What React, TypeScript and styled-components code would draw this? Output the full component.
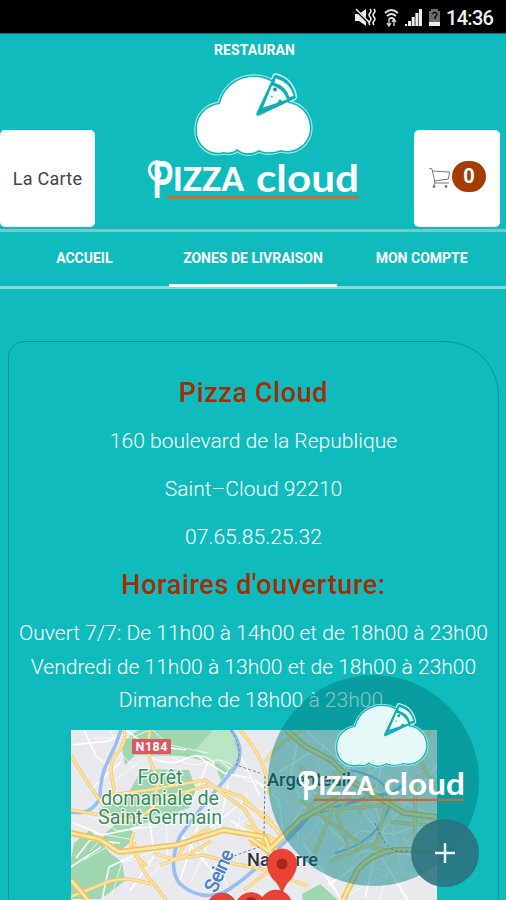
import React from 'react';
import styled, { createGlobalStyle } from 'styled-components';

const GlobalStyle = createGlobalStyle`
  * { box-sizing: border-box; }
  body { margin: 0; background: #10bbbd; }
`;

const Screen = styled.div`
  position: relative;
  width: 506px;
  height: 900px;
  overflow: hidden;
  display: flex;
  flex-direction: column;
  background: #10bbbd;
  font-family: Roboto, "Liberation Sans", sans-serif;
  color: #fff;
`;

const StatusBar = styled.div`
  flex: none;
  height: 34px;
  padding: 3px 12px 0 0;
  background: #000;
  border-bottom: 1px solid #087578;
  display: flex;
  justify-content: flex-end;
  align-items: center;
  gap: 5px;
`;

const Clock = styled.span`
  width: 48px;
  font-size: 20px;
  line-height: 30px;
  font-weight: 500;
  letter-spacing: -0.7px;
  white-space: nowrap;
  color: #f0f0f0;
`;

const Header = styled.header`
  flex: none;
  height: 195px;
  display: grid;
  grid-template-columns: 95px 319px 86px;
  align-items: end;
  padding-bottom: 2px;
`;

const HeaderCard = styled.button`
  height: 97px;
  border: 0;
  border-radius: 5px;
  padding: 0;
  background: #fff;
  display: flex;
  align-items: center;
  justify-content: center;
  gap: 2px;
  font: 400 18px Roboto, sans-serif;
  letter-spacing: 0.25px;
  color: #444;
`;

const CountBadge = styled.span`
  width: 34px;
  height: 31px;
  border-radius: 16px;
  background: #a63c03;
  color: #fff;
  font-size: 20px;
  font-weight: 700;
  line-height: 31px;
  text-align: center;
  margin-top: -4px;
`;

const Brand = styled.div`
  align-self: start;
  display: flex;
  flex-direction: column;
  align-items: center;
`;

const Tagline = styled.div`
  padding-top: 8px;
  height: 34px;
  font-size: 14px;
  line-height: 17px;
  font-weight: 700;
  letter-spacing: 0.1px;
`;

const LogoSvg = styled.svg`
  display: block;
  flex: none;
  overflow: visible;
`;

const Nav = styled.nav`
  flex: none;
  height: 60px;
  border-top: 3px solid #75c9ca;
  border-bottom: 3px solid #8ad5d6;
  display: grid;
  grid-template-columns: repeat(3, 1fr);
`;

const NavItem = styled.a<{ $active?: boolean }>`
  display: flex;
  align-items: center;
  justify-content: center;
  height: 55px;
  padding-bottom: 1px;
  font-size: 14px;
  font-weight: 700;
  white-space: nowrap;
  border-bottom: 3px solid ${p => (p.$active ? '#fff' : 'transparent')};
`;

const Card = styled.main`
  flex: none;
  margin: 52px 7px 0 8px;
  height: 640px;
  border: 1.5px solid #079398;
  border-radius: 16px 54px 0 0;
  padding-top: 34px;
  display: flex;
  flex-direction: column;
  align-items: center;
`;

const Heading = styled.h2`
  margin: 0;
  height: 34px;
  line-height: 34px;
  font-size: 27px;
  font-weight: 500;
  letter-spacing: 0.62px;
  color: #a32e08;
`;

const Address = styled.p`
  margin: 14px 0 0;
  height: 34px;
  line-height: 34px;
  font-size: 21.05px;
  font-weight: 300;
  white-space: nowrap;
`;

const Hours = styled.div`
  margin-top: 14px;
  display: flex;
  flex-direction: column;
  align-items: center;
`;

const HoursLine = styled.div`
  height: 33.6px;
  line-height: 33.6px;
  font-size: 21.05px;
  font-weight: 300;
  white-space: nowrap;
`;

const MapFrame = styled.div`
  margin-top: 13px;
  width: 366px;
  height: 170px;
`;

const Bubble = styled.div`
  position: absolute;
  left: 268px;
  top: 675px;
  width: 211px;
  height: 211px;
  border-radius: 50%;
  background: rgba(1, 128, 132, 0.48);
  padding: 24px 0 0 26px;
`;

const AddButton = styled.button`
  position: absolute;
  left: 411px;
  top: 819px;
  width: 68px;
  height: 68px;
  padding: 0;
  border: 0;
  border-radius: 50%;
  background: rgba(43, 113, 124, 0.88);
  display: flex;
  align-items: center;
  justify-content: center;
`;

const CLOUD =
  'M224 152 C209 156 196 144 197 129 C197 116 206 106 220 104 C224 87 238 77 254 77 C266 77 277 83 284 93 L288 103 C302 105 310 116 310 129 C309 144 295 154 281 150 C272 153 265 153 259 150 C251 155 243 154 237 149 C233 153 228 153 224 152 Z';
const SLICE = 'M258 114 L275.500 76.500 C286 79 292 87 294 97 Z';

function Logo({ width, height, soft = false }: { width: number; height: number; soft?: boolean }) {
  return (
    <LogoSvg width={width} height={height} viewBox="142 68 226 136" preserveAspectRatio="none">
      <g strokeLinejoin="round">
        <path d={CLOUD} fill="none" stroke="#a5e9e8" strokeWidth="5.400" />
        <path d={SLICE} fill="none" stroke="#d4f7f6" strokeWidth="6.500" />
        <path d={CLOUD} fill="#10b5b7" stroke="#10b5b7" strokeWidth="3.200" />
        <path d={CLOUD} fill="#fff" fillOpacity={soft ? 0.9 : 1} />
        <path d={SLICE} fill="#11afb2" stroke="#11afb2" strokeWidth="3.600" />
        <path d="M263 107.500 L272 85.500 C280 88 285 93 287 99.500 L282 101 L280 99 L277 103 Z" fill="#f2fffd" />
        <path d="M275 80.500 C284 83 289.500 89 291.500 96.500" fill="none" stroke="#f2fffd" strokeWidth="4.500" />
        <circle cx="275" cy="89.500" r="1.900" fill="#199b9e" />
        <path d="M270.500 96 l2.500 1" stroke="#39aeb0" strokeWidth="1" />
      </g>
      <path d="M167 197.500 H358" stroke="#c96c2d" strokeWidth="3" />
      <path
        d="M160 162.500 C153 159.500 147.500 167 150 173 C151 176 153 178.500 155.500 179.500 C162 177.500 161 170 156 170.500"
        fill="none" stroke="#fff" strokeWidth="3" strokeLinecap="round"
      />
      <g fill="#fff" fontFamily="Lato" fontWeight="700">
        <text x="152" y="198" fontSize="51" textLength="21" lengthAdjust="spacingAndGlyphs">P</text>
        <text x="173" y="191" fontSize="33" fontWeight="900" textLength="71" lengthAdjust="spacingAndGlyphs">IZZA</text>
        <text x="256" y="191.500" fontSize="38.500" textLength="103" lengthAdjust="spacingAndGlyphs">cloud</text>
      </g>
    </LogoSvg>
  );
}

function StatusIcons() {
  return (
    <svg width="87" height="22" viewBox="355 7 87 22" fill="#eee">
      <path d="M356 14h4l7-5v17l-7-5h-4z" />
      <path d="M357 10l14 14" stroke="#000" strokeWidth="2.500" />
      <path d="M357 9l14 14M371 9q2 2 0 4t0 4 0 4 0 4M375 9q2 2 0 4t0 4 0 4 0 4" fill="none" stroke="#eee" strokeWidth="1.500" />
      <path d="M386 13q6-6 13 0M388 16q4.500-4 9 0M390 19q2.500-2 5 0" fill="none" stroke="#ddd" strokeWidth="2" />
      <path d="M390 19v6M388 23l2 3 2-3M395 26v-6M393 22l2-3 2 3" fill="none" stroke="#ddd" strokeWidth="1.300" />
      <path d="M406 24h2v2h-2zM409 21h3v5h-3zM412.700 17h3v9h-3zM416.400 13h3v13h-3zM420 9h3v17h-3z" />
      <path d="M432 9h7v2h2v11h-11V11h2z" fill="#6a6a6a" />
      <path d="M430 22h11v4h-11z" />
      <path d="M433 14q3-3 5 0 0 2-2 3v2" stroke="#111" fill="none" strokeWidth="1.500" />
    </svg>
  );
}

function CartIcon() {
  return (
    <svg width="22" height="22" viewBox="-1 1 22 22" fill="none" stroke="#777" strokeWidth="1">
      <path d="M0 1l3 1 3 14h14M3.500 4l17 1-1 7-14 2M6 16l-1 2" />
      <circle cx="5" cy="19.500" r="1" fill="#666" />
      <circle cx="17" cy="19.500" r="1" fill="#666" />
    </svg>
  );
}

const MINOR_ROADS = [
  'M71 745l38-4 20-11M84 730l12 26 18 15M90 790l31-28M126 730l20 15 40 5M150 757q20 10 35 2t30 4M71 822l31 13 40-8',
  'M76 858l14-18 30 3M71 867l30-20M102 900l7-33 30-14M150 823l4 33-24 35M196 755l28 18 26 5M208 762l-15 38M228 785l-10 50',
  'M180 833l30 35 15 30M200 820l-20 60M238 750l22 46M245 800l-35 28M255 780l24 20 4 31M230 820l50 35M300 730l-10 49 20 37',
  'M279 772l30-19 32 11M290 828l20-34 26-5M306 731l70 60 56 24M350 730l-8 52 35 48M391 730l-18 70 16 49M409 742l-50 40',
  'M438 765l-45 54-35 36M320 820l35 30 60 5M330 859l30-28 34 3 40-13M328 885l50-33 30 48M303 842l36 54M365 898l12-51M403 838l34 44',
];

const MAIN_ROADS = [
  'M71 755q12 22 33 51M124 730q3 13-7 23t-3 35l-3 15M150 730q-5 23 4 40t-4 32M71 810l64 11 32-24 42-12 33 12 37 35',
  'M104 796l44-6 57-10 40 30 14 24M134 842q5 28 20 42l12 16M160 865q32-10 51-24M153 853l19 6 32-4 31 9 31 6M151 884q-30-10-51 1l-30 12',
  'M240 730q28 31 29 65M243 802l25 16 13 18M250 845l20-5 20 32M210 828q-30 13-32 33M134 832q-10 18 13 34',
  'M265 762q15-22 40-32M300 765l20 28-15 23M315 853l15-37 5-45M353 790l-16 25 12 34M374 784l-15 30M389 794l-14 55 30 2M320 810l70-5M300 800l62 45M430 730l-13 25 18 33M415 775v75',
  'M245 825l33 16M244 890l24-18 40 14M330 861l50-20M390 822l46 4',
];

const HIGHWAYS = [
  'M71 833l28 6 20 13 58-7 47-15 41 7 8 22M71 880l17 20M286 730l20 17 25 13 22 22 51 31 33 4',
  'M250 838l18 13 33-32 38-21M436 850h-41q-22 3-37 19l-15 31',
];

function MapDrawing() {
  return (
    <svg width="366" height="170" viewBox="71 730 366 170">
      <rect x="71" y="730" width="366" height="170" fill="#e8eaed" />
      <g fill="#a0d7b0">
        <path d="M138 730h90l12 18-5 25-14 7-7-17-31-7-48-1-10 10-4-22z" />
        <path d="M142 769l47 1 7 20-7 18-37 13-32 10-22-22 27-10z" />
        <path d="M74 843l16-13 20 23 12 9 3 19-24 18H71v-40z" />
        <path d="M101 837l26-23 7 25-15 13zM302 894l18-10 18 16h-35z" />
      </g>
      <path d="M195 750l18-20h18l9 30-12 10z" fill="#b9e5c5" />
      <g fill="none" stroke="#fff" strokeWidth="1.500">
        {MINOR_ROADS.map(d => <path key={d} d={d} />)}
        {MINOR_ROADS.map(d => <path key={`${d}-alt`} d={d} transform="translate(17 9) rotate(5 254 810)" strokeWidth=".7" />)}
      </g>
      <g fill="none" stroke="#9bbdf4" strokeWidth="3.600">
        <path d="M121 730q-5 16-13 31t-8 37q-9 18-29 14" />
        <path d="M231 730q14 18 6 35l-35 42-22 29q-13 32 0 48 20 17 42 9 17-8 45-35 24-20 43-43l60-18q35-4 35-20" />
        <path d="M350 770q45 8 39 38-13 35-54 45" strokeWidth="2" />
      </g>
      <g fill="none" stroke="#f1c76b" strokeWidth="3.400">
        {MAIN_ROADS.map(d => <path key={d} d={d} />)}
      </g>
      <g fill="none" stroke="#ffe29c" strokeWidth="2">
        {MAIN_ROADS.map(d => <path key={d} d={d} />)}
      </g>
      <g fill="none" stroke="#ecc263" strokeWidth="6">
        {HIGHWAYS.map(d => <path key={d} d={d} />)}
      </g>
      <g fill="none" stroke="#ffe6a3" strokeWidth="2.800">
        {HIGHWAYS.map(d => <path key={d} d={d} />)}
      </g>
      <path d="M231 730q13 20 5 35l24 8M265 776l-1 61M234 856l25-9M375 823q8 22 20 28h42" fill="none" stroke="#7c8490" strokeWidth="1" strokeDasharray="3 2" />
      <rect x="132" y="739" width="39" height="15" rx="1" fill="#dc5861" />
      <text x="151.500" y="751" textAnchor="middle" fontFamily="Roboto" fontSize="12.500" fontWeight="700" fill="#fff" textLength="32">N184</text>
      <g fontFamily="Roboto" fontSize="19.500" textAnchor="middle" fill="#3b8d60" stroke="#fff" strokeWidth="2.500" strokeOpacity=".8" paintOrder="stroke">
        <text x="160" y="784" textLength="45" lengthAdjust="spacingAndGlyphs">Forêt</text>
        <text x="160" y="804.500" textLength="118" lengthAdjust="spacingAndGlyphs">domaniale de</text>
        <text x="160" y="824" textLength="124" lengthAdjust="spacingAndGlyphs">Saint-Germain</text>
      </g>
      <text x="216" y="894" transform="rotate(-66 216 894)" fontFamily="Roboto" fontSize="20" fontWeight="500" fill="#4c7fc5" stroke="#eef2f8" strokeWidth="2" paintOrder="stroke" textLength="45">Seine</text>
      <g fontFamily="Roboto" fontSize="18" fontWeight="500" fill="#30343a" stroke="#fff" strokeWidth="1.500" strokeOpacity=".6" paintOrder="stroke">
        <text x="267" y="786" textLength="84" lengthAdjust="spacingAndGlyphs">Argenteuil</text>
        <text x="247" y="866" textLength="71" lengthAdjust="spacingAndGlyphs">Nanterre</text>
      </g>
      <g fill="#ea4335" stroke="#c5352b" strokeWidth=".6">
        <path d="M207 908a15 15 0 0130 0v8h-30z" />
        <path d="M236 903a16 16 0 0130 0v8h-30z" />
        <path d="M260 906a16 16 0 0132 0v8h-32z" />
        <path d="M282 893q-3-9-9-14c-12-16-3-30 9-30s21 14 9 30q-6 5-9 14z" />
      </g>
      <g fill="#a52720">
        <circle cx="282" cy="864" r="5.500" />
        <ellipse cx="251" cy="901" rx="5.500" ry="4" />
      </g>
    </svg>
  );
}

const HOURS = [
  'Ouvert 7/7: De 11h00 à 14h00 et de 18h00 à 23h00',
  'Vendredi de 11h00 à 13h00 et de 18h00 à 23h00',
  'Dimanche de 18h00 à 23h00.',
];

export default function App() {
  return (
    <>
      <GlobalStyle />
      <Screen>
        <StatusBar>
          <StatusIcons />
          <Clock>14:36</Clock>
        </StatusBar>
        <Header>
          <HeaderCard>La Carte</HeaderCard>
          <Brand>
            <Tagline>RESTAURAN</Tagline>
            <Logo width={226} height={136} />
          </Brand>
          <HeaderCard>
            <CartIcon />
            <CountBadge>0</CountBadge>
          </HeaderCard>
        </Header>
        <Nav>
          <NavItem>ACCUEIL</NavItem>
          <NavItem $active>ZONES DE LIVRAISON</NavItem>
          <NavItem>MON COMPTE</NavItem>
        </Nav>
        <Card>
          <Heading>Pizza Cloud</Heading>
          <Address>160 boulevard de la Republique</Address>
          <Address>Saint–Cloud 92210</Address>
          <Address>07.65.85.25.32</Address>
          <Hours>
            <Heading>Horaires d'ouverture:</Heading>
          </Hours>
          <Hours>
            {HOURS.map(line => <HoursLine key={line}>{line}</HoursLine>)}
          </Hours>
          <MapFrame>
            <MapDrawing />
          </MapFrame>
        </Card>
        <Bubble>
          <Logo width={178} height={106} soft />
        </Bubble>
        <AddButton aria-label="Ajouter">
          <svg width="22" height="22" viewBox="0 0 22 22" stroke="#e6f5f5" strokeWidth="2.500">
            <path d="M1 11h20M11 1v20" />
          </svg>
        </AddButton>
      </Screen>
    </>
  );
}
